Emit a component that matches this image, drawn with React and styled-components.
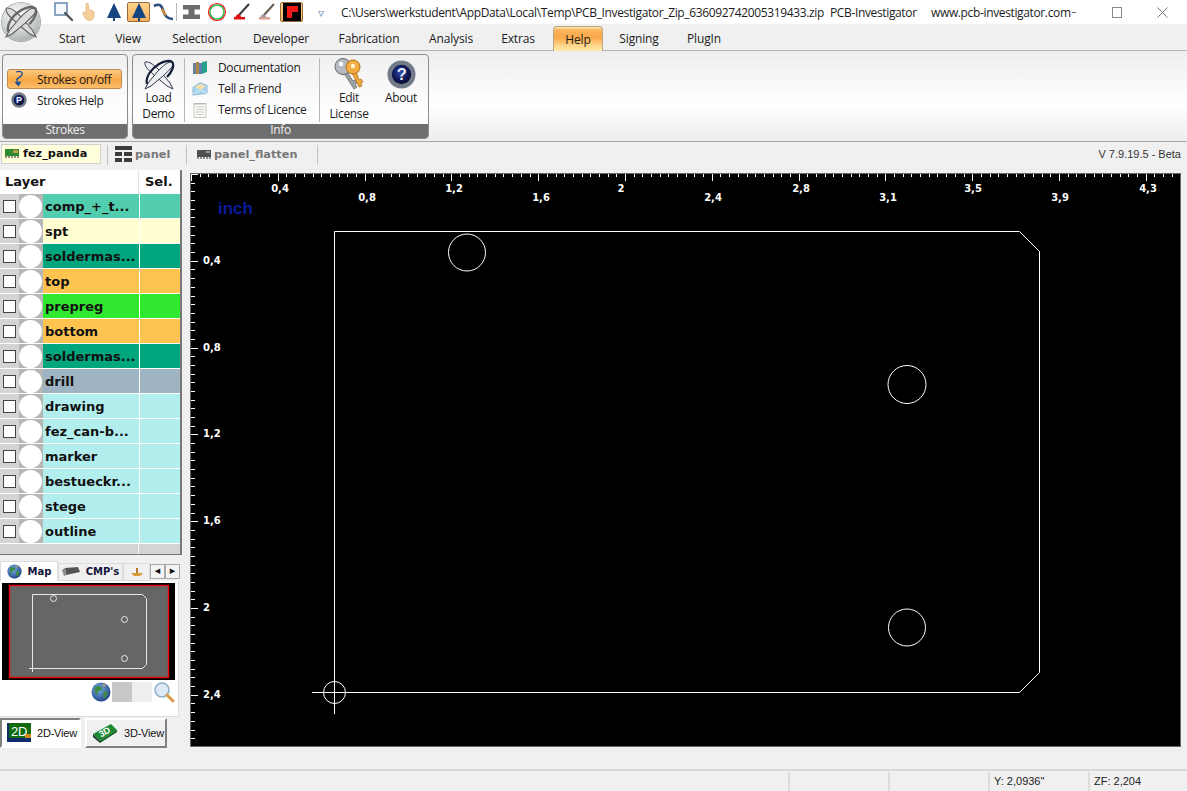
import React from "react";
import styled, { createGlobalStyle } from "styled-components";

const GlobalStyle = createGlobalStyle`
  html, body {
    margin: 0;
    padding: 0;
    background: #f0f0f0;
    overflow: hidden;
  }
  * {
    box-sizing: border-box;
  }
`;

const uiFont = `"Open Sans", "Noto Sans", sans-serif`;
const boldFont = `"DejaVu Sans", Verdana, sans-serif`;
const plainFont = `"Liberation Sans", Arial, sans-serif`;

const tabs = [
  ["Start", 52],
  ["View", 60],
  ["Selection", 78],
  ["Developer", 90],
  ["Fabrication", 86],
  ["Analysis", 78],
  ["Extras", 56],
  ["Help", 50],
  ["Signing", 72],
  ["PlugIn", 58],
];

const layers = [
  ["comp_+_t...", "#52ceae"],
  ["spt", "#ffffd2"],
  ["soldermas...", "#00a67e"],
  ["top", "#ffc350"],
  ["prepreg", "#30e830"],
  ["bottom", "#ffc350"],
  ["soldermas...", "#00a67e"],
  ["drill", "#9fb4c2"],
  ["drawing", "#b2eeee"],
  ["fez_can-b...", "#b2eeee"],
  ["marker", "#b2eeee"],
  ["bestueckr...", "#b2eeee"],
  ["stege", "#b2eeee"],
  ["outline", "#b2eeee"],
];

const topLabels = [
  ["0,4", 280, 188],
  ["0,8", 367, 197],
  ["1,2", 454, 188],
  ["1,6", 541, 197],
  ["2", 621, 188],
  ["2,4", 713, 197],
  ["2,8", 801, 188],
  ["3,1", 888, 197],
  ["3,5", 973, 188],
  ["3,9", 1060, 197],
  ["4,3", 1148, 188],
];

const sideLabels = [
  ["0,4", 260],
  ["0,8", 347],
  ["1,2", 433],
  ["1,6", 520],
  ["2", 607],
  ["2,4", 694],
];

// quick access icons
function Magnifier({ size = 20 }) {
  return (
    <svg width={size} height={size} viewBox="0 0 20 20">
      <rect x="1" y="1" width="12" height="12" fill="#f4f8fc" stroke="#5b7fa8" strokeWidth="1.4" />
      <path d="M11 11l7 7" stroke="#555" strokeWidth="2.4" strokeLinecap="round" />
    </svg>
  );
}

function Hand() {
  return (
    <svg width="18" height="20" viewBox="0 0 18 20">
      <path
        d="M6 2c1-1.4 2.4-1 2.4.5V8l1-.3 1 .3 1.2.2 1.2.6c1 .4 1.2 1 1.2 2v3c0 2.6-2 4.7-4.5 4.7-2.3 0-3.8-1-4.8-3L3 11c-.5-1 .8-1.7 1.6-.8L6 11.5z"
        fill="#f6cf9a"
        stroke="#e6b67c"
        strokeWidth=".8"
      />
    </svg>
  );
}

function Tree() {
  return (
    <svg width="16" height="20" viewBox="0 0 16 20">
      <path d="M8 1l7 15H1z" fill="#15467f" />
      <rect x="7" y="15" width="2" height="4" fill="#15467f" />
    </svg>
  );
}

function Curve() {
  return (
    <svg width="22" height="20" viewBox="0 0 22 20">
      <path d="M1 4c6-3 8 0 9 4s4 9 10 9" fill="none" stroke="#2b4f7c" strokeWidth="2.6" />
      <path d="M9 7c1 2 2 5 4 6" fill="none" stroke="#c98a40" strokeWidth="2.6" />
    </svg>
  );
}

function HBar() {
  return (
    <svg width="20" height="16" viewBox="0 0 20 16">
      <rect x="1" y="1" width="17" height="4.5" fill="#6b6b6b" />
      <rect x="1" y="10.5" width="17" height="4.5" fill="#6b6b6b" />
      <rect x="6.5" y="5" width="6" height="6" fill="#6b6b6b" />
    </svg>
  );
}

function Ring() {
  return (
    <svg width="20" height="20" viewBox="0 0 20 20">
      <circle cx="10" cy="10" r="8.5" fill="#fff" stroke="#e11" strokeWidth="1.2" />
      <circle cx="10" cy="10" r="7" fill="#fff" stroke="#2cb54a" strokeWidth="1.4" />
    </svg>
  );
}

function Brush({ dusty }) {
  return (
    <svg width="20" height="18" viewBox="0 0 20 18">
      <path d="M17 1L7 12" stroke={dusty ? "#6b5a4a" : "#3a3a3a"} strokeWidth="2" />
      <path d="M3 16c0-3 2-5 4-5l2 2c0 2-2 3-6 3z" fill={dusty ? "#9a9aa8" : "#e01010"} />
      <rect x="2" y="14" width="11" height="2.5" fill={dusty ? "#d8a090" : "#e01010"} />
    </svg>
  );
}

function Fab() {
  return (
    <svg width="18" height="18" viewBox="0 0 18 18">
      <rect width="18" height="18" fill="#000" />
      <path d="M4 3h11v6H9v6H4z" fill="#f01818" />
    </svg>
  );
}

function LogoMark({ size = 32, light }) {
  const line = light ? "#5a5a5a" : "#33364a";
  const fill = light ? "#dcdcdc" : "#eceef2";
  return (
    <svg width={size} height={size} viewBox="0 0 32 32">
      <path d="M2 3c5-1 10 4 15 9l10 12 3 6-6-3-12-10C7 12 1 8 2 3z" fill={fill} stroke={line} strokeWidth="1" />
      <path d="M30 3c-5-1-10 4-15 9L5 24l-3 6 6-3 12-10c5-5 11-9 10-14z" fill={fill} stroke={line} strokeWidth="1" />
      <path
        d="M4 25C2 18 8 10 16 5c5-3 11-4 13-2 3 3 0 10-5 15"
        fill="none"
        stroke={light ? "#666" : "#141f3c"}
        strokeWidth="2.2"
      />
    </svg>
  );
}

function StrokeArrow() {
  return (
    <svg width="16" height="18" viewBox="0 0 16 18">
      <path d="M5 2c5-2 8 1 5 4S4 8 7 13" fill="none" stroke="#1f4f96" strokeWidth="1.3" />
      <path d="M3.5 12l4 4.5 3-5z" fill="#1f4f96" />
    </svg>
  );
}

function Orbit({ id, size = 16, mark }) {
  return (
    <svg width={size} height={size} viewBox="0 0 30 30">
      <defs>
        <radialGradient id={id} cx="45%" cy="40%" r="60%">
          <stop offset="0" stopColor="#2f4da8" />
          <stop offset="0.6" stopColor="#101a5c" />
          <stop offset="1" stopColor="#0a0e30" />
        </radialGradient>
      </defs>
      <circle cx="15" cy="15" r="14.5" fill="#737a88" />
      <circle cx="15" cy="15" r="10" fill={`url(#${id})`} />
      <text x="15" y="21" textAnchor="middle" fontSize="17" fontWeight="700" fill="#e6eefc" fontFamily="Liberation Sans">
        {mark}
      </text>
    </svg>
  );
}

function Books() {
  return (
    <svg width="16" height="15" viewBox="0 0 16 15">
      <rect x="1" y="3" width="3" height="11" fill="#6f7f96" />
      <rect x="4" y="2" width="3" height="12" fill="#b0854d" />
      <rect x="7" y="3" width="3" height="11" fill="#5a7fb0" />
      <path d="M10 2l5-1v11l-5 2z" fill="#29a08a" />
    </svg>
  );
}

function Envelope() {
  return (
    <svg width="18" height="17" viewBox="0 0 18 17">
      <path d="M1 7l8-5 8 3v9l-16 2z" fill="#a9d4ee" stroke="#7aa8cc" strokeWidth=".7" />
      <path d="M3 7l6-3.5L15 6l-5 4z" fill="#f7dfa6" />
      <path d="M1 15l8-5 8 4" fill="none" stroke="#dff0fb" strokeWidth="1" />
    </svg>
  );
}

function Sheet() {
  return (
    <svg width="14" height="16" viewBox="0 0 14 16">
      <path d="M1 1.5h12v14H1z" fill="#fbfbf6" stroke="#b8b8b0" strokeWidth=".8" />
      <path d="M3 5h8M3 7.5h8M3 10h8M3 12.5h8" stroke="#c6c6c0" strokeWidth=".9" />
      <path d="M1 1.5l1.5 1 1.5-1 1.5 1 1.5-1 1.5 1 1.500-1 1.500 1 1-1" fill="none" stroke="#999" strokeWidth=".6" />
    </svg>
  );
}

function Keys() {
  return (
    <svg width="30" height="33" viewBox="0 0 30 33">
      <path d="M9 14l11 17 3-2-2-3 2-1-2-3-2 1-7-11z" fill="#9aa0a6" stroke="#666" strokeWidth=".7" />
      <ellipse cx="9" cy="8.5" rx="8" ry="8" fill="#b4bac0" stroke="#666" strokeWidth="1" />
      <circle cx="7" cy="6" r="2.2" fill="#fff" />
      <path d="M17 13l8 16 3-1-1-3 2-1-2-3-2 1-3-9z" fill="#eea73c" stroke="#b06c18" strokeWidth=".7" />
      <circle cx="19" cy="9" r="7" fill="#f2ad45" stroke="#b06c18" strokeWidth="1" />
      <circle cx="19" cy="8" r="2.2" fill="#fff2c8" />
    </svg>
  );
}

function Globe({ id, size = 20 }) {
  return (
    <svg width={size} height={size} viewBox="0 0 20 20">
      <defs>
        <radialGradient id={id} cx="40%" cy="35%" r="70%">
          <stop offset="0" stopColor="#7ab0e8" />
          <stop offset="1" stopColor="#1d3f84" />
        </radialGradient>
      </defs>
      <circle cx="10" cy="10" r="9.5" fill={`url(#${id})`} />
      <path d="M4 5c3-2 6-1 7 1s-1 3-3 3-1 3-2 4-3-4-2-8zM13 9l4 1-1 4-3 3-1-4z" fill="#3d8a46" />
      <path d="M11 2l4 1-2 2z" fill="#c9a85f" />
    </svg>
  );
}

function Loupe() {
  return (
    <svg width="22" height="22" viewBox="0 0 22 22">
      <circle cx="9" cy="9" r="7" fill="#dbeaf6" stroke="#8fb2cc" strokeWidth="1.6" />
      <path d="M14 14l6 6" stroke="#d89a4a" strokeWidth="3" strokeLinecap="round" />
    </svg>
  );
}

function BoardSmall() {
  return (
    <svg width="14" height="10" viewBox="0 0 14 10">
      <rect y="1" width="14" height="7" fill="#2f8a2f" />
      <path d="M1 8v2M4 8v2M7 8v2M10 8v2M13 8v2" stroke="#222" />
      <rect x="8" y="2" width="5" height="3" fill="#bba24a" />
    </svg>
  );
}

function PanelIcon() {
  return (
    <svg width="17" height="16" viewBox="0 0 17 16">
      <path d="M0 0h17v4H0zM0 6h7v4H0zM9 6h8v4H9zM0 12h7v4H0zM9 12h8v4H9z" fill="#3c3c3c" />
    </svg>
  );
}

function ChipIcon() {
  return (
    <svg width="14" height="10" viewBox="0 0 14 10">
      <rect y="1" width="14" height="7" fill="#505050" />
      <path d="M1 8v2M4 8v2M7 8v2M10 8v2M13 8v2" stroke="#333" />
      <rect x="9" y="2" width="4" height="2" fill="#9a9a9a" />
    </svg>
  );
}

function CmpIcon() {
  return (
    <svg width="18" height="11" viewBox="0 0 18 11">
      <path d="M3 2l13-1 2 5-14 3z" fill="#555" />
      <path d="M0 4l3-2 1 7-2 1z" fill="#8a8a8a" />
    </svg>
  );
}

function SolderIcon() {
  return (
    <svg width="14" height="10" viewBox="0 0 14 10">
      <path d="M1 6h12l-3 3H4z" fill="#d99a3c" />
      <path d="M7 1v5" stroke="#b87a28" strokeWidth="2" />
    </svg>
  );
}

function Icon2D() {
  return (
    <svg width="24" height="20" viewBox="0 0 24 20">
      <rect x="0" y="0" width="24" height="19" fill="#0f2b6a" />
      <rect x="2" y="0" width="22" height="15" fill="#0f6a10" />
      <rect x="18" y="11" width="6" height="4" fill="#d08a1c" />
      <text x="12" y="13" textAnchor="middle" fontSize="13" fill="#fff" fontFamily="Liberation Sans">
        2D
      </text>
    </svg>
  );
}

function Icon3D() {
  return (
    <svg width="26" height="20" viewBox="0 0 26 20">
      <path d="M1 11L19 1l6 6L8 18z" fill="#1c8a34" />
      <path d="M1 11l7 7v2l-7-6z" fill="#1a3a22" />
      <path d="M8 18L25 7v2L8 20z" fill="#0e5a20" />
      <text x="13" y="12" textAnchor="middle" fontSize="9" fontWeight="700" fill="#fff" fontFamily="Liberation Sans" transform="rotate(-28 13 10)">
        3D
      </text>
    </svg>
  );
}

function BoardCanvas() {
  const ticksX = Array.from({ length: 114 }, (_, i) => i);
  const ticksY = Array.from({ length: 66 }, (_, i) => i);
  return (
    <CanvasSvg viewBox="190 173 991 574">
      {ticksX.map((i) => {
        const x = Math.round(191 + i * 8.68) + 0.5;
        return <line key={i} x1={x} x2={x} y1="174" y2={i % 10 === 0 ? 181 : 177} stroke="#fff" />;
      })}
      {ticksY.map((i) => {
        const y = Math.round(174 + i * 8.68) + 0.5;
        return <line key={i} x1="191" x2={i % 10 === 0 ? 198 : 195} y1={y} y2={y} stroke="#fff" />;
      })}
      {topLabels.map(([t, x, y]) => (
        <RulerText key={t} x={x} y={y + 4} textAnchor="middle">
          {t}
        </RulerText>
      ))}
      {sideLabels.map(([t, y]) => (
        <RulerText key={t} x="203" y={y + 4}>
          {t}
        </RulerText>
      ))}
      <UnitText x="218" y="214">
        inch
      </UnitText>
      <g fill="none" stroke="#fff" strokeWidth="1">
        <path d="M334.5 231.5H1019.5L1039.5 251.5V672.5L1019.5 692.5H334.5Z" />
        <circle cx="467" cy="252.5" r="18.5" />
        <circle cx="907" cy="384.5" r="19" />
        <circle cx="907" cy="627.5" r="18.5" />
        <circle cx="334.5" cy="692.5" r="11" />
        <path d="M312 692.5H334.5M334.5 692.5V714" />
      </g>
    </CanvasSvg>
  );
}

function MiniMap() {
  return (
    <MapSvg viewBox="0 0 173 97">
      <rect width="173" height="97" fill="#000" />
      <rect x="7.5" y="2.5" width="159" height="92" fill="#666" stroke="#f00000" strokeWidth="1.4" />
      <g fill="none" stroke="#e8e8e8">
        <path d="M30.5 11.5H140.5L144.5 15.5V81.5L140.5 85.5H30.5Z" />
        <circle cx="51.5" cy="15.5" r="3" />
        <circle cx="122.5" cy="36.5" r="3" />
        <circle cx="122.5" cy="75.5" r="3" />
        <path d="M27 85.5H34M30.5 82V89" />
      </g>
    </MapSvg>
  );
}

export default function App() {
  return (
    <Page>
      <GlobalStyle />
      <Orb>
        <LogoMark size={34} light />
      </Orb>

      <TitleBar>
        <QuickAccess>
          <QuickButton><Magnifier /></QuickButton>
          <QuickButton><Hand /></QuickButton>
          <QuickButton><Tree /></QuickButton>
          <QuickButton $active><Tree /></QuickButton>
          <QuickButton><Curve /></QuickButton>
          <QuickDivider />
          <QuickButton><HBar /></QuickButton>
          <QuickButton><Ring /></QuickButton>
          <QuickButton><Brush /></QuickButton>
          <QuickButton><Brush dusty /></QuickButton>
          <QuickButton $active><Fab /></QuickButton>
          <QuickMore>▿</QuickMore>
        </QuickAccess>
        <TitleText $width={489}>C:\Users\werkstudent\AppData\Local\Temp\PCB_Investigator_Zip_636092742005319433.zip</TitleText>
        <TitleText $width={101}>PCB-Investigator</TitleText>
        <TitleText $width={144}>www.pcb-investigator.com</TitleText>
        <Minimize />
        <Maximize />
        <CloseMark>
          <svg width="11" height="11" viewBox="0 0 11 11">
            <path d="M.5.5l10 10M10.5.5l-10 10" stroke="#777" fill="none" />
          </svg>
        </CloseMark>
      </TitleBar>

      <TabRow>
        {tabs.map(([name, width]) => (
          <Tab key={name} $width={width} $active={name === "Help"} $after={name === "Extras" ? 7 : 0}>
            {name}
          </Tab>
        ))}
      </TabRow>

      <Ribbon>
        <Group $width={126}>
          <StrokesBody>
            <StrokeButton $on>
              <StrokeArrow />
              Strokes on/off
            </StrokeButton>
            <StrokeButton>
              <Orbit id="strokes-help" mark="P" />
              Strokes Help
            </StrokeButton>
          </StrokesBody>
          <GroupLabel>Strokes</GroupLabel>
        </Group>

        <Group $width={297}>
          <InfoBody>
            <LargeButton $width={51}>
              <LargeIcon><LogoMark /></LargeIcon>
              Load
              <br />
              Demo
            </LargeButton>
            <GroupDivider />
            <LinkList>
              <LinkRow><LinkIcon><Books /></LinkIcon>Documentation</LinkRow>
              <LinkRow><LinkIcon><Envelope /></LinkIcon>Tell a Friend</LinkRow>
              <LinkRow><LinkIcon><Sheet /></LinkIcon>Terms of Licence</LinkRow>
            </LinkList>
            <GroupDivider />
            <LargeButton $width={58}>
              <LargeIcon><Keys /></LargeIcon>
              Edit
              <br />
              License
            </LargeButton>
            <LargeButton $width={46}>
              <LargeIcon><Orbit id="about" size={29} mark="?" /></LargeIcon>
              About
            </LargeButton>
          </InfoBody>
          <GroupLabel>Info</GroupLabel>
        </Group>
      </Ribbon>

      <FileBar>
        <FileCell $width={107}>
          <ActiveFile>
            <BoardSmall />
            fez_panda
          </ActiveFile>
        </FileCell>
        <FileCell $width={79} $pad={7}>
          <PanelIcon />
          panel
        </FileCell>
        <FileCell $width={131} $pad={10}>
          <ChipIcon />
          panel_flatten
        </FileCell>
        <Version>V 7.9.19.5 - Beta</Version>
      </FileBar>

      <Main>
        <Sidebar>
          <LayerPanel>
            <LayerHeader>
              <HeaderName>Layer</HeaderName>
              <HeaderSel>Sel.</HeaderSel>
            </LayerHeader>
            {layers.map(([name, color], i) => (
              <LayerRow key={i}>
                <CheckCell><Check /></CheckCell>
                <DotCell><Dot /></DotCell>
                <NameCell $color={color}>{name}</NameCell>
                <SelCell $color={color} />
              </LayerRow>
            ))}
            <LayerFooter>
              <span />
              <span />
            </LayerFooter>
          </LayerPanel>

          <SideTabs>
            <SideTab $active $width={58}><Globe id="tab-globe" size={15} />Map</SideTab>
            <SideTab $width={65}><CmpIcon />CMP's</SideTab>
            <SideTab $width={27}><SolderIcon /></SideTab>
            <ArrowButton>◂</ArrowButton>
            <ArrowButton>▸</ArrowButton>
          </SideTabs>

          <MapPanel>
            <MiniMap />
            <MapTools>
              <Globe id="tool-globe" />
              <Swatches>
                <Swatch $color="#c8c8c8" />
                <Swatch $color="#eeeeee" />
              </Swatches>
              <Loupe />
            </MapTools>
          </MapPanel>

          <ViewButtons>
            <ViewButton $active $width={81}><Icon2D />2D-View</ViewButton>
            <ViewButton $width={82}><Icon3D />3D-View</ViewButton>
          </ViewButtons>
        </Sidebar>

        <CanvasFrame>
          <BoardCanvas />
        </CanvasFrame>
      </Main>

      <StatusBar>
        <StatusCell />
        <StatusCell />
        <StatusCell />
        <StatusCell>Y: 2,0936"</StatusCell>
        <StatusCell>ZF: 2,204</StatusCell>
      </StatusBar>
    </Page>
  );
}

const Page = styled.div`
  position: relative;
  width: 1187px;
  height: 791px;
  overflow: hidden;
  background: #f0f0f0;
  color: #1c1c1c;
  font-family: ${uiFont};
  font-size: 12px;
`;

const Orb = styled.div`
  position: absolute;
  left: 2px;
  top: 3px;
  width: 38px;
  height: 38px;
  border-radius: 50%;
  display: flex;
  align-items: center;
  justify-content: center;
  background: radial-gradient(circle at 40% 30%, #fafafa 0%, #cfd3d3 50%, #8e9494 100%);
  box-shadow: 0 0 0 1px #a8acac;
`;

const TitleBar = styled.div`
  height: 24px;
  background: #fff;
  display: flex;
  align-items: center;
  padding-left: 51px;
  letter-spacing: -0.36px;
`;

const QuickAccess = styled.div`
  display: flex;
  align-items: center;
  width: 290px;
`;

const QuickButton = styled.div`
  width: ${(p) => (p.$active ? "23px" : "25px")};
  height: 20px;
  margin: ${(p) => (p.$active ? "0 1px" : "0")};
  display: flex;
  align-items: center;
  justify-content: center;
  border-radius: 2px;
  border: ${(p) => (p.$active ? "1px solid #9a6c3a" : "none")};
  background: ${(p) => (p.$active ? "linear-gradient(#fbd38c, #f6b25e)" : "none")};
`;

const QuickDivider = styled.div`
  width: 1px;
  height: 18px;
  margin-right: 2px;
  background: #b9b9b9;
`;

const QuickMore = styled.div`
  width: 33px;
  text-align: center;
  color: #6a8fc0;
  font-size: 12px;
`;

const TitleText = styled.span`
  width: ${(p) => p.$width}px;
  white-space: nowrap;
`;

const Minimize = styled.div`
  width: 4px;
  height: 1px;
  margin-left: -3px;
  background: #666;
`;

const Maximize = styled.div`
  width: 10px;
  height: 11px;
  margin-left: 36px;
  border: 1px solid #888;
`;

const CloseMark = styled.div`
  display: flex;
  margin-left: 35px;
`;

const TabRow = styled.div`
  height: 27px;
  padding-left: 46px;
  display: flex;
  align-items: flex-end;
  border-bottom: 1px solid #b4b4b4;
  letter-spacing: -0.15px;
`;

const Tab = styled.div`
  width: ${(p) => p.$width}px;
  height: 25px;
  margin-right: ${(p) => p.$after}px;
  margin-bottom: ${(p) => (p.$active ? "-1px" : "0")};
  padding-top: 5px;
  text-align: center;
  ${(p) =>
    p.$active
      ? `border: 1px solid #b8a888; border-bottom: none; border-radius: 4px 4px 0 0;
         padding-top: 4px;
         background: linear-gradient(#fde6b0 0, #fbb45c 3px, #fba84a 45%, #fdd488 75%, #fee9a8 100%);`
      : ""}
`;

const Ribbon = styled.div`
  height: 91px;
  padding: 3px 2px 2px;
  display: flex;
  gap: 4px;
  border-bottom: 1px solid #a8a8a8;
  background: linear-gradient(#ededed 0%, #fdfdfd 50%, #fff 60%, #ececec 100%);
  letter-spacing: -0.36px;
`;

const Group = styled.div`
  width: ${(p) => p.$width}px;
  height: 85px;
  display: flex;
  flex-direction: column;
  border: 1px solid #8c8c8c;
  border-radius: 4px;
  overflow: hidden;
  background: linear-gradient(#f0f0f0, #fff 70%, #f6f6f6);
`;

const GroupLabel = styled.div`
  height: 14px;
  line-height: 12px;
  text-align: center;
  color: #eee;
  background: #6e6e6e;
`;

const StrokesBody = styled.div`
  flex: 1;
  padding: 14px 0 0 4px;
  display: flex;
  flex-direction: column;
  gap: 1px;
`;

const StrokeButton = styled.div`
  width: 115px;
  height: 20px;
  display: flex;
  align-items: center;
  gap: 10px;
  padding-left: 3px;
  border-radius: 3px;
  border: 1px solid ${(p) => (p.$on ? "#c08a50" : "transparent")};
  background: ${(p) => (p.$on ? "linear-gradient(#fbc983, #f9a845 55%, #fbbe6c)" : "none")};
`;

const InfoBody = styled.div`
  flex: 1;
  display: flex;
`;

const LargeButton = styled.div`
  width: ${(p) => p.$width}px;
  padding-top: 4px;
  text-align: center;
  line-height: 16px;
`;

const LargeIcon = styled.div`
  height: 31px;
  display: flex;
  justify-content: center;
  align-items: center;
`;

const GroupDivider = styled.div`
  width: 1px;
  margin: 3px 0 2px;
  background: #b8b8b8;
`;

const LinkList = styled.div`
  width: 134px;
  padding: 2px 0 0 7px;
`;

const LinkRow = styled.div`
  height: 21px;
  display: flex;
  align-items: center;
  gap: 10px;
`;

const LinkIcon = styled.div`
  width: 16px;
  display: flex;
  justify-content: center;
`;

const FileBar = styled.div`
  height: 26px;
  padding: 3px 0 3px 1px;
  display: flex;
  align-items: stretch;
  font-family: ${boldFont};
  font-size: 11.3px;
  font-weight: 700;
  color: #777;
`;

const FileCell = styled.div`
  width: ${(p) => p.$width}px;
  padding: 0 0 2px ${(p) => p.$pad || 0}px;
  display: flex;
  align-items: center;
  gap: 3px;
  border-right: 1px solid #c4c4c4;
`;

const ActiveFile = styled.div`
  width: 100px;
  height: 20px;
  display: flex;
  align-items: center;
  gap: 4px;
  padding: 0 0 2px 3px;
  color: #111;
  background: #ffffdc;
  border: 1px solid #d0d0d0;
`;

const Version = styled.div`
  margin-left: auto;
  padding: 3px 6px 0 0;
  font-family: ${plainFont};
  font-size: 11px;
  font-weight: 400;
  color: #333;
`;

const Main = styled.div`
  height: 601px;
  display: flex;
`;

const Sidebar = styled.div`
  width: 190px;
  padding-top: 2px;
  flex-shrink: 0;
`;

const LayerPanel = styled.div`
  width: 182px;
  height: 385px;
  background: #fff;
  border-right: 2px solid #777;
  border-bottom: 2px solid #777;
  font-family: ${boldFont};
  font-size: 13px;
  font-weight: 700;
  color: #111;
`;

const LayerHeader = styled.div`
  height: 24px;
  display: flex;
  align-items: center;
  background: #fff;
`;

const HeaderName = styled.div`
  width: 139px;
  height: 100%;
  padding: 4px 0 0 5px;
  border-right: 1px solid #e4e4e4;
`;

const HeaderSel = styled.div`
  height: 100%;
  padding: 4px 0 0 6px;
`;

const LayerRow = styled.div`
  height: 25px;
  display: flex;
  padding-bottom: 1px;
`;

const CheckCell = styled.div`
  width: 19px;
  display: flex;
  align-items: center;
  padding-left: 3px;
  background: #d4d4d4;
`;

const Check = styled.div`
  width: 13px;
  height: 13px;
  background: #fff;
  border: 1px solid #444;
`;

const DotCell = styled.div`
  width: 24px;
  display: flex;
  align-items: center;
  background: #b6b6b6;
`;

const Dot = styled.div`
  width: 23px;
  height: 23px;
  border-radius: 50%;
  background: #fff;
`;

const NameCell = styled.div`
  width: 96px;
  padding-left: 2px;
  line-height: 26px;
  background: ${(p) => p.$color};
  white-space: nowrap;
  overflow: hidden;
`;

const SelCell = styled.div`
  flex: 1;
  margin-left: 1px;
  background: ${(p) => p.$color};
`;

const LayerFooter = styled.div`
  height: 10px;
  display: flex;
  background: #d4d4d4;
  span:first-child {
    width: 139px;
    border-right: 1px solid #f4f4f4;
  }
`;

const SideTabs = styled.div`
  height: 20px;
  margin-top: 6px;
  display: flex;
  align-items: flex-end;
  font-family: ${boldFont};
  font-size: 10px;
  font-weight: 700;
  color: #14143c;
`;

const SideTab = styled.div`
  width: ${(p) => p.$width}px;
  height: ${(p) => (p.$active ? "20px" : "18px")};
  padding-bottom: 1px;
  display: flex;
  align-items: center;
  justify-content: center;
  gap: 6px;
  background: ${(p) => (p.$active ? "#fff" : "#f0f0f0")};
  border: 1px solid #ddd;
  border-bottom: ${(p) => (p.$active ? "none" : "1px solid #ddd")};
`;

const ArrowButton = styled.div`
  width: 15px;
  height: 15px;
  margin-bottom: 2px;
  line-height: 12px;
  text-align: center;
  font-size: 11px;
  color: #111;
  background: #f4f4f4;
  border: 1px solid #a8a8a8;
`;

const MapPanel = styled.div`
  width: 179px;
  height: 136px;
  padding: 2px 0 0 2px;
  background: #fff;
  border-right: 1px solid #ddd;
  border-bottom: 1px solid #ddd;
`;

const MapSvg = styled.svg`
  display: block;
  width: 173px;
  height: 97px;
`;

const MapTools = styled.div`
  height: 20px;
  margin-top: 2px;
  padding-left: 89px;
  display: flex;
  align-items: center;
`;

const Swatches = styled.div`
  display: flex;
  margin: 0 0 0 1px;
  padding-right: 1px;
`;

const Swatch = styled.div`
  width: 20px;
  height: 20px;
  background: ${(p) => p.$color};
`;

const ViewButtons = styled.div`
  margin-top: 1px;
  display: flex;
  gap: 4px;
`;

const ViewButton = styled.div`
  width: ${(p) => p.$width}px;
  height: 30px;
  display: flex;
  align-items: center;
  gap: 6px;
  padding-left: 5px;
  font-family: ${plainFont};
  font-size: 11px;
  letter-spacing: -0.2px;
  white-space: nowrap;
  color: #111;
  background: ${(p) => (p.$active ? "#fff" : "#f0f0f0")};
  border-style: solid;
  border-width: 2px;
  border-color: ${(p) => (p.$active ? "#808080 #fff #fff #808080" : "#fff #808080 #808080 #fff")};
`;

const CanvasFrame = styled.div`
  width: 991px;
  height: 574px;
  margin-top: 5px;
`;

const CanvasSvg = styled.svg`
  display: block;
  width: 991px;
  height: 574px;
  background: #000;
  outline: 1px solid #666;
  outline-offset: -1px;
`;

const RulerText = styled.text`
  fill: #fff;
  font-family: ${boldFont};
  font-size: 10px;
  font-weight: 700;
`;

const UnitText = styled.text`
  fill: #0b1b9a;
  font-family: ${plainFont};
  font-size: 17px;
  font-weight: 700;
`;

const StatusBar = styled.div`
  height: 22px;
  padding-top: 1px;
  display: grid;
  grid-template-columns: 790px 100px 100px 100px 97px;
  border-top: 2px solid #d8d8d8;
  font-family: ${plainFont};
  font-size: 11px;
  color: #222;
`;

const StatusCell = styled.div`
  padding-left: 4px;
  line-height: 19px;
  border-right: 2px solid #dcdcdc;
  &:last-child {
    border-right: none;
  }
`;
